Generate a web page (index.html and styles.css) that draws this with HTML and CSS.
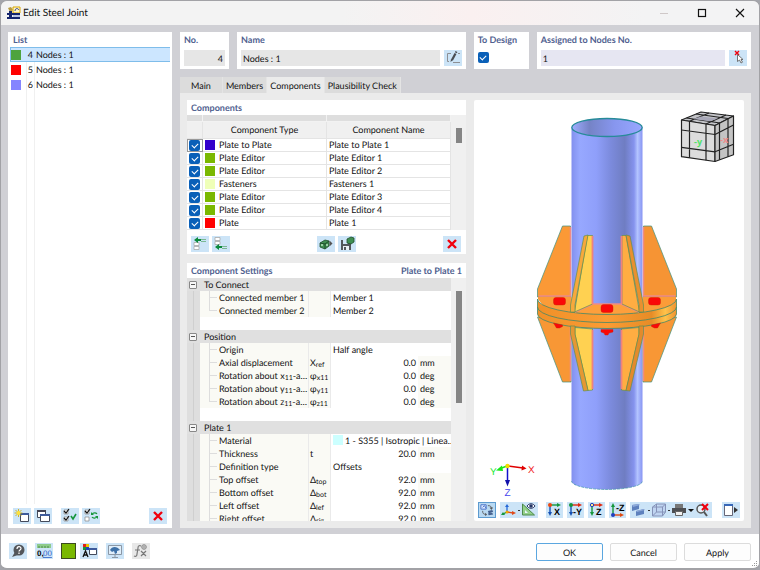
FILE: index.html
```html
<!DOCTYPE html>
<html lang="en">
<head>
<meta charset="utf-8">
<meta name="viewport" content="width=device-width, initial-scale=1">
<title>Edit Steel Joint</title>
<link rel="stylesheet" href="styles.css">
</head>
<body>
<div class="window">
  <header class="titlebar">
    <svg class="app-icon" width="14" height="14" viewBox="0 0 14 14"><path d="M1 2l3-1 2 3-3 2z" fill="#b89a3c"/><path d="M6 1h7v6H6z" fill="#fff6c8" stroke="#d8a600"/><path d="M8 5c0-3 3-3 4-1" fill="none" stroke="#2a3b8f"/><path d="M0 7h13v2H0zM0 11h13v2H0z" fill="#14246e"/><path d="M2 5h3v8H2z" fill="#14246e"/><path d="M6 10h7" stroke="#7e93d6"/></svg>
    <h1>Edit Steel Joint</h1>
    <button class="win-btn" aria-label="Minimize" disabled><svg width="10" height="10" viewBox="0 0 10 10"><path d="M1 5.500h8" stroke="#cfc8c8"/></svg></button>
    <button class="win-btn" aria-label="Maximize"><svg width="10" height="10" viewBox="0 0 10 10"><rect x="1.500" y="1.500" width="7" height="7" fill="none" stroke="#111" stroke-width="1.200"/></svg></button>
    <button class="win-btn" aria-label="Close"><svg width="10" height="10" viewBox="0 0 10 10"><path d="M1 1l8 8M9 1l-8 8" stroke="#111" stroke-width="1.100"/></svg></button>
  </header>

  <main class="content">
    <section class="card list-card">
      <h2>List</h2>
      <ul class="node-list">
        <li class="selected"><i class="sw green"></i><b>4</b><span>Nodes : 1</span></li>
        <li><i class="sw red"></i><b>5</b><span>Nodes : 1</span></li>
        <li><i class="sw lilac"></i><b>6</b><span>Nodes : 1</span></li>
      </ul>
      <div class="bar">
        <button class="tool" aria-label="New"><svg viewBox="0 0 18 16"><path d="M7.500 6.500h8v7h-8z" fill="#fff" stroke="#444b5c"/><path d="M7 5h9v2H7z" fill="#3d5a9b"/><path d="M5.500 1v8M1.500 5h8M2.500 2l6 6M8.500 2l-6 6" stroke="#c9a800" stroke-width=".8"/><circle cx="5.500" cy="5" r="2" fill="#ffe23b"/></svg></button>
        <button class="tool" aria-label="Copy"><svg viewBox="0 0 18 16"><path d="M3.500 2.500h8v7h-8z" fill="#fff" stroke="#444b5c"/><path d="M3 2h9v2H3z" fill="#445"/><path d="M6.500 6.500h9v7h-9z" fill="#fff" stroke="#444b5c"/><path d="M6 6h10v2H6z" fill="#3d5a9b"/></svg></button>
        <button class="tool gap" aria-label="Select all"><svg viewBox="0 0 18 16"><path d="M3 2h4v4H3zM3 9h4v4H3z" fill="#fff" stroke="#888" stroke-width=".7"/><path d="M3 3l2 2 3-4M3 10l2 2 3-4" fill="none" stroke="#111" stroke-width="1.200"/><path d="M10 8l2 3 3-5" fill="none" stroke="#15963c" stroke-width="1.600"/></svg></button>
        <button class="tool" aria-label="Invert selection"><svg viewBox="0 0 18 16"><path d="M3 2h4v4H3zM3 9h4v4H3z" fill="#fff" stroke="#888" stroke-width=".7"/><path d="M3 3l2 2 3-4" fill="none" stroke="#111" stroke-width="1.200"/><path d="M10 6.500c1-2 4-2 5-.5M15 8.500c-1 2-4 2-5 .5" fill="none" stroke="#15963c" stroke-width="1.200"/><path d="M9 4v3h3zM16 11V8h-3z" fill="#15963c"/></svg></button>
        <button class="tool end" aria-label="Delete"><svg viewBox="0 0 18 16"><path d="M5 4l8 8M13 4l-8 8" stroke="#f0000d" stroke-width="2.400"/></svg></button>
      </div>
    </section>

    <div class="main-col">
      <div class="fields">
        <div class="card field no"><label for="no">No.</label><input id="no" value="4" readonly></div>
        <div class="card field name"><label for="name">Name</label>
          <div class="pair"><input id="name" value="Nodes : 1" readonly><button class="tool" aria-label="Edit name"><svg viewBox="0 0 18 16"><path d="M7 3.500H3.500v8H5M9 12.500h7M14 3.500h2" fill="none" stroke="#8d8f93"/><path d="M11.500 3.500L8 10" stroke="#4a4d52" stroke-width="2.200"/><path d="M7 9l2 1-2.500 2z" fill="#4a4d52"/><path d="M12.500 1.500l-.7 1.300" stroke="#4a4d52" stroke-width="2.200"/></svg></button></div></div>
        <div class="card field design"><label for="design">To Design</label><input id="design" class="check" type="checkbox" checked></div>
        <div class="card field nodes"><label for="nodes">Assigned to Nodes No.</label>
          <div class="pair"><input id="nodes" value="1"><button class="tool" aria-label="Pick nodes"><svg viewBox="0 0 18 16"><path d="M6 1l4 4M10 1L6 5" stroke="#f0000d" stroke-width="1.400"/><path d="M8.500 4.500v7l2-1.500 1.500 3 1.500-.8-1.500-2.700h2z" fill="#fff" stroke="#555" stroke-width=".8"/></svg></button></div></div>
      </div>

      <nav class="tabs">
        <button>Main</button><button>Members</button><button class="active">Components</button><button>Plausibility Check</button>
      </nav>

      <div class="pane">
        <div class="left">
          <section class="card components">
            <h2>Components</h2>
            <div class="scroller">
              <div class="rows"><table class="comp">
                <colgroup><col class="c-check"><col><col class="c-name"></colgroup>
                <thead>
                  <tr class="strip"><td></td><td></td><td></td></tr>
                  <tr><th></th><th>Component Type</th><th>Component Name</th></tr>
                </thead>
                <tbody>
                  <tr><td class="focus"><input class="check" type="checkbox" checked aria-label="Plate to Plate 1"></td><td><i class="sw indigo"></i>Plate to Plate</td><td>Plate to Plate 1</td></tr>
                  <tr><td><input class="check" type="checkbox" checked aria-label="Plate Editor 1"></td><td><i class="sw lime"></i>Plate Editor</td><td>Plate Editor 1</td></tr>
                  <tr><td><input class="check" type="checkbox" checked aria-label="Plate Editor 2"></td><td><i class="sw lime"></i>Plate Editor</td><td>Plate Editor 2</td></tr>
                  <tr><td><input class="check" type="checkbox" checked aria-label="Fasteners 1"></td><td><i class="sw cream"></i>Fasteners</td><td>Fasteners 1</td></tr>
                  <tr><td><input class="check" type="checkbox" checked aria-label="Plate Editor 3"></td><td><i class="sw lime"></i>Plate Editor</td><td>Plate Editor 3</td></tr>
                  <tr><td><input class="check" type="checkbox" checked aria-label="Plate Editor 4"></td><td><i class="sw lime"></i>Plate Editor</td><td>Plate Editor 4</td></tr>
                  <tr><td><input class="check" type="checkbox" checked aria-label="Plate 1"></td><td><i class="sw red"></i>Plate</td><td>Plate 1</td></tr>
                </tbody>
              </table></div>
              <div class="track short"><i></i></div>
            </div>
            <div class="bar">
              <button class="tool" aria-label="Insert before"><svg viewBox="0 0 18 16"><path d="M3 6.500h5v3H3zM3 10.500h5v3H3z" fill="#fff" stroke="#aaa" stroke-width=".8"/><path d="M7 3.500h8M10 5.500h5" stroke="#7ab893"/><path d="M3 4l4-3v2h3v2H7v2z" fill="#0c8a3c"/></svg></button>
              <button class="tool" aria-label="Insert after"><svg viewBox="0 0 18 16"><path d="M3 1.500h5v3H3zM3 5.500h5v3H3z" fill="#fff" stroke="#aaa" stroke-width=".8"/><path d="M7 10.500h8M10 12.500h5" stroke="#7ab893"/><path d="M3 11l4-3v2h3v2H7v2z" fill="#0c8a3c"/></svg></button>
              <button class="tool end" aria-label="Import from library"><svg viewBox="0 0 18 16"><path d="M3 7l5-3 4 1v5l-4 3-5-2z" fill="#3f8f52" stroke="#1f4d2b" stroke-width=".8"/><path d="M3 7l5 1 4-3M8 8v5" fill="none" stroke="#1f4d2b"/><path d="M4 8h2v2H4zM9 8h2v2H9z" fill="#9ad0a5"/><path d="M12.500 4.500l3 3-3 3z" fill="#555"/></svg></button>
              <button class="tool" aria-label="Save to library"><svg viewBox="0 0 18 16"><path d="M3 4h8l2 2v8H3z" fill="#53565b"/><path d="M5 4h5v4H5z" fill="#cfe4f5"/><path d="M5 10h6v4H5z" fill="#e9eef3"/><path d="M6 11h2v3H6z" fill="#53565b"/><path d="M9 3l4-2 3 1v4l-3 2-4-1z" fill="#3f8f52" stroke="#1f4d2b" stroke-width=".8"/></svg></button>
              <button class="tool end" aria-label="Delete component"><svg viewBox="0 0 18 16"><path d="M5 4l8 8M13 4l-8 8" stroke="#f0000d" stroke-width="2.400"/></svg></button>
            </div>
          </section>

          <section class="card settings">
            <div class="set-head"><h2>Component Settings</h2><h2>Plate to Plate 1</h2></div>
            <div class="scroller">
              <div class="rows"><table class="props">
                <colgroup><col class="p-gut"><col class="p-label"><col class="p-sym"><col><col class="p-unit"></colgroup>
                <tbody>
                  <tr class="group"><td><i class="minus"></i></td><th colspan="4">To Connect</th></tr>
                  <tr><td></td><th>Connected member 1</th><td></td><td colspan="2">Member 1</td></tr>
                  <tr class="last"><td></td><th>Connected member 2</th><td></td><td colspan="2">Member 2</td></tr>
                  <tr class="blank"><td></td><td colspan="4"></td></tr>
                  <tr class="group"><td><i class="minus"></i></td><th colspan="4">Position</th></tr>
                  <tr><td></td><th>Origin</th><td></td><td colspan="2">Half angle</td></tr>
                  <tr><td></td><th>Axial displacement</th><td>X<small>ref</small></td><td class="num">0.0</td><td>mm</td></tr>
                  <tr><td></td><th>Rotation about x<small>11</small>-a…</th><td>φ<small>x11</small></td><td class="num">0.0</td><td>deg</td></tr>
                  <tr><td></td><th>Rotation about y<small>11</small>-a…</th><td>φ<small>y11</small></td><td class="num">0.0</td><td>deg</td></tr>
                  <tr class="last"><td></td><th>Rotation about z<small>11</small>-a…</th><td>φ<small>z11</small></td><td class="num">0.0</td><td>deg</td></tr>
                  <tr class="blank"><td></td><td colspan="4"></td></tr>
                  <tr class="group"><td><i class="minus"></i></td><th colspan="4">Plate 1</th></tr>
                  <tr><td></td><th>Material</th><td></td><td colspan="2"><i class="sw cyan"></i>1 - S355 | Isotropic | Linea…</td></tr>
                  <tr><td></td><th>Thickness</th><td>t</td><td class="num">20.0</td><td>mm</td></tr>
                  <tr><td></td><th>Definition type</th><td></td><td colspan="2">Offsets</td></tr>
                  <tr><td></td><th>Top offset</th><td>Δ<small>top</small></td><td class="num">92.0</td><td>mm</td></tr>
                  <tr><td></td><th>Bottom offset</th><td>Δ<small>bot</small></td><td class="num">92.0</td><td>mm</td></tr>
                  <tr><td></td><th>Left offset</th><td>Δ<small>lef</small></td><td class="num">92.0</td><td>mm</td></tr>
                  <tr><td></td><th>Right offset</th><td>Δ<small>rig</small></td><td class="num">92.0</td><td>mm</td></tr>
                </tbody>
              </table></div>
              <div class="track long"><i></i></div>
            </div>
          </section>
        </div>

        <section class="card view">
          <svg class="scene" viewBox="474 100 270 401" role="img" aria-label="Steel joint model">
            <defs>
              <linearGradient id="tube"><stop offset="0" stop-color="#8290ee"/><stop offset=".12" stop-color="#97a8ff"/><stop offset=".35" stop-color="#8f9ffa"/><stop offset=".55" stop-color="#7c8bdd"/><stop offset=".75" stop-color="#6f7dc2"/><stop offset=".88" stop-color="#8593ee"/><stop offset=".93" stop-color="#b3c4ff"/><stop offset="1" stop-color="#8794f3"/></linearGradient>
              <linearGradient id="bore"><stop offset="0" stop-color="#a0adff"/><stop offset=".25" stop-color="#7583c6"/><stop offset=".6" stop-color="#8796ee"/><stop offset="1" stop-color="#98a7ff"/></linearGradient>
              <linearGradient id="ring"><stop offset="0" stop-color="#f09028"/><stop offset=".5" stop-color="#fb9c34"/><stop offset=".82" stop-color="#e78c26"/><stop offset=".92" stop-color="#ffc24a"/><stop offset="1" stop-color="#ee9230"/></linearGradient>
            </defs>
            <path d="M571.500 127.500V481a35.500 8.500 0 0 0 71 0V127.500z" fill="url(#tube)"/>
            <path d="M571.500 481a35.500 8.500 0 0 0 71 0" fill="none" stroke="#2b8f9c" stroke-width=".6" stroke-dasharray="3 1"/>
            <ellipse cx="607" cy="127.500" rx="35.200" ry="9" fill="url(#bore)" stroke="#278b99" stroke-width="1.300"/>
            <g stroke="#3f9080" stroke-width=".7" stroke-linejoin="round">
              <path d="M562.500 226h8v71h-33v-8z" fill="#fb9936"/><path d="M651.500 226h-8v71h33v-8z" fill="#f69434"/>
              <path d="M537.500 317l25 65h8.500v-58z" fill="#f89735"/><path d="M676.500 317l-25 65H643v-58z" fill="#f89735"/>
            </g>
            <path d="M570.500 227v69h-32M643.500 227v69h32M570.500 324v57M643.500 324v57" fill="none" stroke="#f08b86" stroke-width="1.500"/>
            <path d="M538 299v-2h33.500v8h71v-8H676v4l-10 10-59 8-60-8z" fill="#fb9c38"/>
            <path d="M574.500 312l18-8h29l18 8a70 15 0 0 1-65 0z" fill="#fd9f3c"/>
            <path d="M537.500 299a69.500 15.500 0 0 0 139 0v15a69.500 14.500 0 0 1-139 0z" fill="url(#ring)"/>
            <path d="M537.500 299v15M676.500 299v15M537.500 299a69.500 15.500 0 0 0 139 0M537.500 307a69.500 15.500 0 0 0 139 0M537.500 314a69.500 14.500 0 0 0 139 0" fill="none" stroke="#43886a" stroke-width=".8"/>
            <path d="M575 312l18-8h28l18 8" fill="none" stroke="#f08b86" stroke-width="1.500"/>
            <g stroke="#62904f" stroke-width=".7" stroke-linejoin="round">
              <path d="M587.500 235.500h5V304L574.500 312z" fill="#ffd151"/><path d="M584 236l4-1-13 70v7h-4.500v-7z" fill="#f7a83c"/>
              <path d="M622 235.500h4L639.500 312 622 304z" fill="#ffad42"/><path d="M626 235l4 1 13.500 69v7H639v-7z" fill="#e9902f"/>
              <path d="M575 327.500l17.500 1.500v61l-4.500.500-13-56z" fill="#ffd151"/><path d="M570.500 326h4.500v8l13 56.500-4.500.500-13-57z" fill="#e59733"/>
              <path d="M639 327.500l-17.500 1.500v61l4.500.500 13-56z" fill="#ffad42"/><path d="M643.500 326H639v8l-13 56.500 4 .500 13.500-57z" fill="#e38a2c"/>
            </g>
            <path d="M592.500 236v68M621.500 236v68M592.500 330v59M621.500 330v59" stroke="#ee827f" stroke-width="1.800"/>
            <g fill="#fa0808" stroke="#c20" stroke-width=".4"><rect x="553.500" y="297.500" width="12" height="7.500" rx="2.500"/><rect x="601" y="304.500" width="12" height="8" rx="2.500"/><rect x="648.500" y="297.500" width="12" height="7.500" rx="2.500"/>
              <path d="M553.500 323l9 2v1.500l-3 1.500h-3zM660.500 323l-9 2v1.500l3 1.500h3zM601 329.500h12v2.500l-4 1-1 2h-3l-1-2-3-1z"/></g>

            <g stroke="#222" stroke-width="1.200" stroke-linejoin="round">
              <path d="M681.500 120l19.500-8 32.500 4-18.500 9.500z" fill="#c3c4c8"/><path d="M681.500 120l33.500 5.500v36l-33.500-4.800z" fill="#dcdcdc"/><path d="M715 125.500l18.500-9.500v38.700L715 161.500z" fill="#c4c4c4"/>
              <path d="M689.500 121.300v36.500M706 124v36.200M681.500 130l33.500 4.500 18.500-9.500M681.500 147.300l33.500 4.500 18.500-7.500M719.500 123.200v36.500M728 118.800v38M686.500 118l33.500 5M696 114l32 4.500M689.500 121.300l19.500-8.300M706 124l20-9" fill="none"/>
              <path d="M701 116.500l17 2-8 2.800-17-2.300z" fill="#a8a8b8" stroke="none"/>
            </g>
            <g class="cube-text"><text x="694" y="145" fill="#52e36a">-y</text><text x="720" y="143" fill="#ef8c8c">-x</text></g>
            <path d="M507.500 466v15" stroke="#1111cc" stroke-width="1.500"/><path d="M505 480h5l-2.500 6.500z" fill="#1111aa"/>
            <path d="M508 466l15 2" stroke="#e00000" stroke-width="1.500"/><path d="M522 465.500l4.500 3-5 2z" fill="#e00000"/>
            <path d="M507 466l-8 3" stroke="#18e818" stroke-width="1.500"/><path d="M502 465.500l-6 5 7 .5z" fill="#18e818"/><circle cx="507.500" cy="466" r="2.200" fill="#f4dc00"/>
            <g class="axis-text"><text x="490" y="475" fill="#20e82c">Y</text><text x="528" y="472.500" fill="#f02020">X</text><text x="504.500" y="495.500" fill="#4444ee">Z</text></g>
          </svg>
          <div class="view-bar">
            <button class="tool pressed" aria-label="Link views"><svg viewBox="0 0 18 16"><path d="M2 2h6v5H2z" fill="#dbe9ff" stroke="#4169c4"/><path d="M4 5l2-2 2 3" stroke="#4169c4" fill="none"/><path d="M10 9l5-1 1 2-5 2zM10 12l5-1 1 2-5 1z" fill="#44608e"/><path d="M10 3c3 0 4 1 4 3M4 9c0 3 1 4 4 4" stroke="#555" fill="none"/><path d="M12 5h4l-2 3zM7 11v4l2-2z" fill="#555"/></svg></button>
            <div class="run"><button class="tool" aria-label="Axes"><svg viewBox="0 0 18 16"><path d="M7 10V4" stroke="#2468d8" stroke-width="1.300"/><path d="M7 10l6 1" stroke="#e04a1a" stroke-width="1.300"/><path d="M7 10l-4 2" stroke="#15963c" stroke-width="1.300"/><path d="M5 5l2-3 2 3z" fill="#2468d8"/><path d="M12 9l4 2-4 2z" fill="#e04a1a"/><path d="M3 10l-2 3 4 0z" fill="#15963c"/><circle cx="7" cy="10" r="1.500" fill="#f2a900"/></svg></button><i class="dot"></i><button class="tool" aria-label="Dimensions"><svg viewBox="0 0 18 16"><path d="M2.500 2v11h12z" fill="#93cf8a" stroke="#4c8a4b"/><path d="M5 8v3h3z" fill="#eaf5ff"/><path d="M7 4c2-3 6-3 8 0-2 3-6 3-8 0z" fill="#fff" stroke="#233666"/><circle cx="11" cy="4" r="1.800" fill="#233666"/></svg></button></div>
            <button class="tool axis" aria-label="View in X"><svg viewBox="0 0 17 16"><path d="M4 3v8" stroke="#1450b4" stroke-width="1.400"/><path d="M4 3h8" stroke="#15963c" stroke-width="1.400"/><path d="M2 10h4l-2 4z" fill="#1450b4"/><path d="M11 1l4 2-4 2z" fill="#15963c"/><circle cx="4" cy="3" r="2" fill="#ee4a10"/><text x="8" y="13">X</text></svg></button>
            <button class="tool axis" aria-label="View in minus Y"><svg viewBox="0 0 17 16"><path d="M4 3v8" stroke="#1450b4" stroke-width="1.400"/><path d="M4 3h8" stroke="#e02a10" stroke-width="1.400"/><path d="M2 10h4l-2 4z" fill="#1450b4"/><path d="M11 1l4 2-4 2z" fill="#e02a10"/><circle cx="4" cy="3" r="2" fill="#15963c"/><text x="6" y="13">-Y</text></svg></button>
            <button class="tool axis" aria-label="View in Z"><svg viewBox="0 0 17 16"><path d="M4 3v8" stroke="#15963c" stroke-width="1.400"/><path d="M4 3h8" stroke="#e02a10" stroke-width="1.400"/><path d="M2 10h4l-2 4z" fill="#15963c"/><path d="M11 1l4 2-4 2z" fill="#e02a10"/><circle cx="4" cy="3" r="1.700" fill="#ffe98a" stroke="#2040c0"/><text x="8" y="13">Z</text></svg></button>
            <button class="tool axis" aria-label="View in minus Z"><svg viewBox="0 0 17 16"><path d="M4 13V5" stroke="#15963c" stroke-width="1.400"/><path d="M4 13h8" stroke="#e04a10" stroke-width="1.400"/><path d="M2 5h4L4 1z" fill="#15963c"/><path d="M11 11l4 2-4 2z" fill="#e04a10"/><circle cx="4" cy="13" r="2" fill="#2040c0"/><text x="7" y="9">-Z</text></svg></button>
            <div class="run wide"><button class="tool" aria-label="Solid"><svg viewBox="0 0 18 16"><path d="M2 3l7-1v5l-7 2zM6 9l8-2v5l-8 2z" fill="#5d80bd"/><path d="M2 3l7-1 1 1-7 2zM6 9l8-2 1 1-8 2z" fill="#8eaada"/></svg></button><i class="dot"></i><button class="tool" aria-label="Wireframe"><svg viewBox="0 0 18 16"><path d="M2.500 5l4-3h9v8l-3 4h-10zM2.500 5h10v9M12.500 5l3-3M6.500 2v8h9M6.500 10l-4 4" fill="#b6caed" fill-opacity=".6" stroke="#8592b8"/></svg></button><i class="dot"></i><button class="tool" aria-label="Print"><svg viewBox="0 0 18 16"><path d="M5 2h8v4H5z" fill="#777"/><path d="M2 6h14v5H2z" fill="#4d4f53"/><path d="M5.500 9.500h7v4h-7z" fill="#f1f1f1" stroke="#666"/></svg></button><i class="caret"></i><button class="tool" aria-label="Reset zoom"><svg viewBox="0 0 18 16"><circle cx="7" cy="7" r="4" fill="#e6f0f8" stroke="#555" stroke-width="1.500"/><path d="M10 10l3 4" stroke="#555" stroke-width="2"/><path d="M8 2l6 6M14 2L8 8" stroke="#f0000d" stroke-width="2"/></svg></button></div>
            <button class="tool end" aria-label="Hide panel"><svg viewBox="0 0 18 16"><path d="M2.500 2.500h8v11h-8z" fill="#fff" stroke="#667"/><path d="M2 2h9v2H2z" fill="#3767b8"/><path d="M12 5l4 3-4 3z" fill="#333"/></svg></button>
          </div>
        </section>
      </div>
    </div>
  </main>

  <footer class="footer">
    <button class="tool" aria-label="Help"><svg viewBox="0 0 18 16"><circle cx="10" cy="7" r="5.500" fill="#53565b"/><path d="M6 9l-3 5 6-2z" fill="#53565b"/><path d="M8 6c0-3 4-3 4-.5 0 1.500-2 1.500-2 3M10 9.500v1.500" stroke="#fff" stroke-width="1.200" fill="none"/></svg></button>
    <button class="tool" aria-label="Units"><svg viewBox="0 0 18 16"><path d="M2 1h14v4H2z" fill="#8ecb8b"/><path d="M4 3v2M7 3v2M10 3v2M13 3v2" stroke="#4c8a4b"/><text class="num-a" x="2" y="13">0,</text><text class="num-b" x="8" y="13">00</text></svg></button>
    <button class="color" aria-label="Color"></button>
    <button class="tool near" aria-label="Display properties"><svg viewBox="0 0 18 16"><path d="M3 1h3v3H3z" fill="#e02020"/><path d="M6 1h3v3H6z" fill="#e9c400"/><path d="M3 4h3v3H3z" fill="#15963c"/><path d="M6 4h3v3H6z" fill="#2040c0"/><path d="M3 14l2.500-6L8 14M4 12h3" stroke="#111" stroke-width="1.300" fill="none"/><path d="M9.500 5.500h7v6h-7z" fill="#fff" stroke="#444b5c"/><path d="M9 5h8v2H9z" fill="#3d5a9b"/></svg></button>
    <button class="tool" aria-label="Screen"><svg viewBox="0 0 18 16"><path d="M2.500 2.500h13v9h-13zM9 12v2M6 14.500h6" fill="#e0eefa" stroke="#8b97a5"/><path d="M4 7c2-4 7-4 10 0l-3 1v2l-2 1-1-3-2 1z" fill="#3e71a8"/></svg></button>
    <button class="tool gray" aria-label="Formula"><svg viewBox="0 0 18 16"><path d="M9 3c-2-1-3 0-3 2l-1 6c0 2-1 3-3 2M3 7h5M9 8l5 5M14 8l-5 5" fill="none" stroke="#777" stroke-width="1.200"/><circle cx="12" cy="4" r="2.300" fill="none" stroke="#888"/><path d="M12 2v4M10 4h4" stroke="#888" stroke-width=".7"/></svg></button>
    <div class="actions"><button class="primary">OK</button><button>Cancel</button><button>Apply</button></div>
    <svg class="grip" viewBox="0 0 7 7"><path d="M5 1h1v1H5zM3 3h1v1H3zM5 3h1v1H5zM1 5h1v1H1zM3 5h1v1H3zM5 5h1v1H5z" fill="#9a9a9a"/></svg>
  </footer>
</div>
</body>
</html>
```
FILE: styles.css
```css
* { box-sizing: border-box; }
body {
  margin: 0;
  background: #a4a5ab;
  color: #111;
  font: 9px/13px Lato, "Open Sans", sans-serif;
  text-rendering: geometricPrecision;
}
button, input { font: inherit; color: inherit; margin: 0; padding: 0; border: 0; text-rendering: inherit; }
h1, h2, ul { margin: 0; padding: 0; }
svg { display: block; }

.window {
  height: 100vh;
  display: flex;
  flex-direction: column;
  background: #d0d0d5;
  border: 1px solid #a2a2a6;
  border-bottom-width: 2px;
  border-radius: 7px;
  overflow: hidden;
}
.titlebar {
  display: flex;
  align-items: center;
  height: 24px;
  flex: none;
  padding-left: 6px;
  background: linear-gradient(90deg, #f3f3f3, #f3f3f3 45%, #faf0f0 62%, #f3f3f4 85%);
}
.titlebar h1 { flex: 1; margin-left: 2px; font-size: 10px; font-weight: 400; }
.win-btn { width: 38px; height: 24px; display: grid; place-items: center; background: none; }

.content { flex: 1; min-height: 0; display: flex; gap: 8px; padding: 7px 8px 6px 7px; }
.card { background: #fff; }
h2, .field label { display: block; color: #50618f; font-size: 9px; font-weight: 700; line-height: 15px; }

.list-card { width: 164px; flex: none; display: flex; flex-direction: column; }
.list-card h2 { padding-left: 5px; }
.node-list {
  flex: 1;
  list-style: none;
  margin: 0 2px;
  background: linear-gradient(#f0f0f0, #f0f0f0) 16px 0 / 1px 100% no-repeat, linear-gradient(#f0f0f0, #f0f0f0) 24px 0 / 1px 100% no-repeat;
}
.node-list li { display: flex; align-items: center; height: 15px; border: 1px solid transparent; border-right: 0; }
.node-list .selected { background: #cce6ff; border-color: #7fbdea; }
.node-list b { width: 12px; text-align: right; font-weight: 400; }
.node-list span { margin-left: 3px; }
.sw { display: inline-block; flex: none; width: 10px; height: 10px; }
.green { background: #4ea33e; } .red { background: #f00; } .lilac { background: #8585ff; }
.indigo { background: #3300cc; } .lime { background: #7ab800; } .cream { background: #efffb8; } .cyan { background: #ccffff; }

.bar { display: flex; gap: 3px; padding: 4px 5px; }
.tool { width: 18px; height: 16px; flex: none; display: grid; place-items: center; background: #cce4f7; }
.tool svg { width: 100%; height: 100%; }
.tool.gap { margin-left: 6px; }
.end { margin-left: auto; }

.main-col { flex: 1; min-width: 0; display: flex; flex-direction: column; }
.fields { display: flex; gap: 8px; }
.field { height: 37px; padding: 0 4px; }
.field input:not(.check) { display: block; width: 100%; height: 16px; margin-top: 3px; padding: 0 2px; background: #e6e6e6; }
.pair { display: flex; gap: 4px; }
.pair input { flex: 1; min-width: 0; }
.pair .tool { margin-top: 3px; }
.no { width: 49px; } .no input { text-align: right; }
.name { flex: 229; } .design { width: 55px; } .nodes { flex: 214; }
.field.nodes input:not(.check) { background: #e6e6f2; }
.check {
  appearance: none;
  width: 11px;
  height: 11px;
  display: grid;
  place-items: center;
  border-radius: 2px;
  background: #0a60b8;
}
.check::after { content: ""; width: 5px; height: 3px; margin-top: -1px; border: solid #fff; border-width: 0 0 1px 1px; transform: rotate(-45deg); }
.design .check { margin-top: 5px; }

.tabs { display: flex; margin-top: 8px; }
.tabs button { height: 16px; padding: 0 3px; background: #dcdcdc; border-right: 1px solid #e4e4e4; }
.tabs button:first-child { padding: 0 11px; }
.tabs .active { background: #ebebeb; }

.pane { flex: 1; min-height: 0; display: flex; gap: 8px; padding: 7px; background: #ebebeb; }
.left { flex: 279; min-width: 0; display: flex; flex-direction: column; gap: 9px; }
.components h2 { padding-left: 4px; }
.scroller { display: flex; overflow: hidden; }
.rows { flex: 1; min-width: 0; }
.rows table { width: 100%; table-layout: fixed; border-collapse: separate; border-spacing: 0; }
td, th { height: 13px; padding: 0; font-weight: 400; text-align: left; white-space: nowrap; overflow: hidden; line-height: 12px; }
.comp .c-check { width: 16px; } .comp .c-name { width: 124px; }
.comp td, .comp th { border: solid #e4e4e4; border-width: 0 1px 1px 0; }
.comp .strip td { height: 7px; line-height: 6px; background: #dedede; border-color: #f2f2f2; }
.comp th { height: 17px; text-align: center; background: #f0f0f0; }
.comp tbody td { padding-left: 2px; }
.comp .sw { margin-right: 4px; vertical-align: top; margin-top: 1px; }
.comp .focus { outline: 1px solid #999; outline-offset: -1px; }
.track { width: 15px; flex: none; background: #f0f0f0; }
.track i { display: block; width: 6px; margin-left: 5px; background: #858585; }
.short i { height: 15px; margin-top: 13px; }
.long i { height: 112px; margin-top: 13px; }
.components .bar { padding: 6px 5px 2px 4px; }

.settings { flex: 1; min-height: 0; display: flex; flex-direction: column; }
.set-head { display: flex; justify-content: space-between; padding: 0 4px; }
.settings .scroller { flex: 1; min-height: 0; }
.p-gut { width: 13px; } .p-label { width: 108px; } .p-sym { width: 23px; } .p-unit { width: 33px; }
.props td { padding-left: 2px; line-height: 13px; }
.props th { padding-left: 19px; line-height: 13px; background: linear-gradient(#ddd, #ddd) 9px 0 / 1px 100% no-repeat, linear-gradient(#ddd, #ddd) 9px 6px / 8px 1px no-repeat, #fafaf5; }
.props .last th { background-size: 1px 7px, 8px 1px, auto; }
.props td:first-child { background: linear-gradient(#cfcfcf, #cfcfcf) 6px 0 / 1px 100% no-repeat, #dedede; }
.props th + td { padding-left: 1px; background: #fafaf5; border: solid #eaeaea; border-width: 0 1px; }
.props .num { text-align: right; padding-right: 2px; }
.props .num + td { padding-left: 2px; background: #fafaf5; }
.props .group td:first-child, .props .group th { background: #e0e0e0; }
.props .group th { padding-left: 4px; }
.minus { position: relative; display: block; width: 8px; height: 8px; border: 1px solid #888; border-radius: 1px; background: #f6f6f6; }
.minus::after { content: ""; position: absolute; inset: 2px 1px auto; height: 1px; background: #555; }
small { font-size: 7px; position: relative; top: 1px; line-height: 8px; }
.props .sw { vertical-align: top; margin: 1px 2px 0 0; }

.view { flex: 270; min-width: 0; display: flex; flex-direction: column; border-radius: 2px; }
.scene { flex: 1; min-height: 0; width: 100%; }
.cube-text { font: 700 9px "Open Sans", sans-serif; }
.axis-text { font: 10px "Liberation Sans", sans-serif; }
.view-bar { display: flex; gap: 4px; height: 20px; padding: 1px 4px; }
.pressed { border: 1px solid #5d9bd0; background: #b9d9f2; }
.run { display: flex; align-items: center; height: 16px; background: #cce4f7; }
.run + .axis { margin-left: 4px; }
.axis { width: 17px; }
.axis text { font: 700 9px "Liberation Sans", sans-serif; }
.dot { width: 2px; height: 1px; background: #333; }
.caret { border: solid transparent; border-width: 3px 3px 0; border-top-color: #111; }

.footer { position: relative; flex: none; height: 34px; display: flex; align-items: flex-start; gap: 8px; padding: 9px 8px 0; background: #fff; }
.color { width: 15px; height: 16px; background: #7ab800; border: 1px solid #3c4a1e; }
.near { margin-left: -4px; }
.gray { background: #e8e8e8; }
.num-a, .num-b { font: 700 8px "Liberation Sans", sans-serif; }
.num-b { fill: #2c62c8; font-weight: 400; text-decoration: underline; }
.actions { margin-left: auto; display: flex; gap: 7px; }
.actions button { width: 67px; height: 18px; background: #fdfdfd; border: 1px solid #dcdcdc; border-radius: 2px; }
.actions .primary { border-color: #5ba7e0; }
.grip { position: absolute; right: 1px; bottom: 1px; width: 7px; height: 7px; }
```
